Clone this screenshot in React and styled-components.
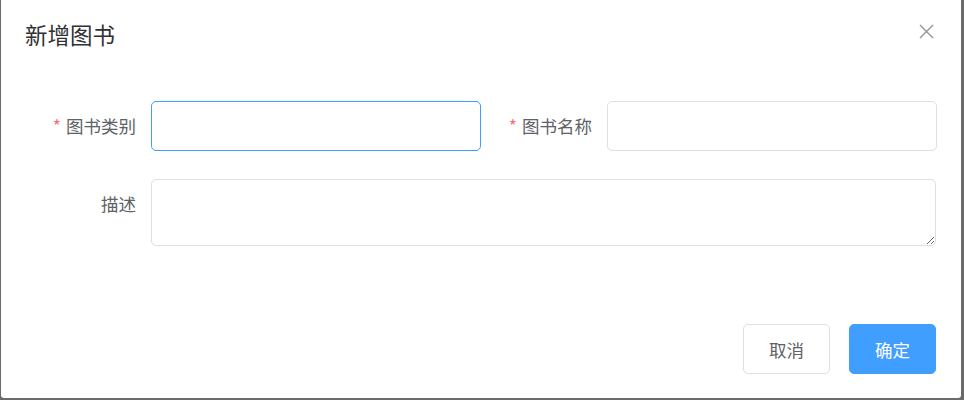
import React from 'react';
import styled, { createGlobalStyle } from 'styled-components';

const GlobalStyle = createGlobalStyle`
  html, body {
    margin: 0;
    padding: 0;
    background: #6b6b6b;
  }
  body {
    font-family: "Noto Sans CJK SC", "Noto Sans", "Liberation Sans", sans-serif;
  }
`;

const Overlay = styled.div`
  width: 964px;
  height: 400px;
  box-sizing: border-box;
  padding: 0 3px 2px 1px;
  background: #6b6b6b;
  overflow: hidden;
`;

const Dialog = styled.div`
  position: relative;
  width: 960px;
  height: 398px;
  box-sizing: border-box;
  background: #fff;
  border-radius: 0 0 3px 3px;
  display: flex;
  flex-direction: column;
`;

const Header = styled.div`
  padding: 19px 25px 15px 24px;
`;

const Title = styled.span`
  display: block;
  font-size: 22.5px;
  line-height: 30px;
  color: #303133;
`;

const CloseButton = styled.button`
  position: absolute;
  top: 23px;
  right: 27px;
  width: 16px;
  height: 16px;
  padding: 0;
  border: none;
  background: transparent;
  cursor: pointer;
  display: flex;
  align-items: center;
  justify-content: center;
`;

const Body = styled.div`
  padding: 37px 25px 37px 24px;
`;

const FormRow = styled.div`
  display: flex;
  margin-bottom: 28px;

  &:last-child {
    margin-bottom: 0;
  }
`;

const FormItem = styled.div`
  display: flex;
  flex: ${p => (p.wide ? '1 1 auto' : '0 0 454px')};
`;

const Label = styled.label`
  width: 126px;
  flex: none;
  box-sizing: border-box;
  padding-right: 15px;
  text-align: right;
  font-size: 17.5px;
  line-height: 50px;
  color: #606266;
`;

const Star = styled.span`
  color: #f56c6c;
  margin-right: 5px;
`;

const Input = styled.input`
  width: 330px;
  height: 50px;
  box-sizing: border-box;
  border: 1px solid ${p => (p.focused ? '#409eff' : '#dcdfe6')};
  border-radius: 5px;
  padding: 0 18px;
  font-size: 17.5px;
  color: #606266;
  outline: none;
  font-family: inherit;
`;

const TextArea = styled.textarea`
  flex: 1;
  height: 67px;
  box-sizing: border-box;
  border: 1px solid #dcdfe6;
  border-radius: 5px;
  padding: 6px 18px;
  font-size: 17.5px;
  color: #606266;
  outline: none;
  font-family: inherit;
  display: block;
`;

const Footer = styled.div`
  margin-top: auto;
  padding: 0 25px 24px;
  display: flex;
  justify-content: flex-end;
  gap: 19px;
`;

const Button = styled.button`
  width: 87px;
  height: 50px;
  box-sizing: border-box;
  border-radius: 5px;
  font-size: 17.5px;
  font-family: inherit;
  cursor: pointer;
  border: 1px solid ${p => (p.primary ? '#409eff' : '#dcdfe6')};
  background: ${p => (p.primary ? '#409eff' : '#fff')};
  color: ${p => (p.primary ? '#fff' : '#606266')};
`;

const CloseIcon = () => (
  <svg width="15" height="15" viewBox="0 0 15 15">
    <path d="M1 1 L14 14 M14 1 L1 14" stroke="#909399" strokeWidth="1.4" fill="none" />
  </svg>
);

const App = () => (
  <>
    <GlobalStyle />
    <Overlay>
      <Dialog>
        <Header>
          <Title>新增图书</Title>
          <CloseButton aria-label="关闭">
            <CloseIcon />
          </CloseButton>
        </Header>
        <Body>
          <FormRow>
            <FormItem>
              <Label><Star>*</Star>图书类别</Label>
              <Input focused />
            </FormItem>
            <FormItem>
              <Label><Star>*</Star>图书名称</Label>
              <Input />
            </FormItem>
          </FormRow>
          <FormRow>
            <FormItem wide>
              <Label>描述</Label>
              <TextArea />
            </FormItem>
          </FormRow>
        </Body>
        <Footer>
          <Button>取消</Button>
          <Button primary>确定</Button>
        </Footer>
      </Dialog>
    </Overlay>
  </>
);

export default App;
